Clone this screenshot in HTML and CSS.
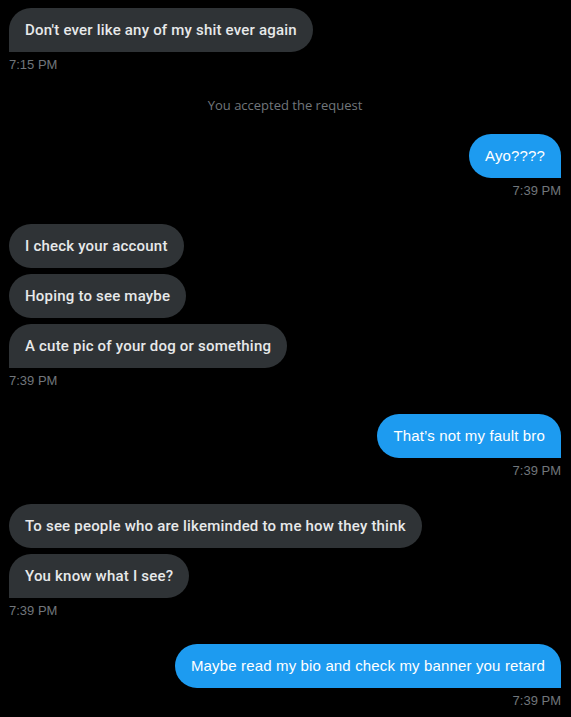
FILE: index.html
```html
<!DOCTYPE html>
<html lang="en">
<head>
    <meta charset="UTF-8">
    <meta name="viewport" content="width=device-width, initial-scale=1.0">
    <title>Messages</title>
    <link rel="stylesheet" href="styles.css">
</head>
<body>
    <div class="chat">
        <div class="group them">
            <div class="bubble last">Don't ever like any of my shit ever again</div>
            <div class="time">7:15 PM</div>
        </div>

        <div class="notice">You accepted the request</div>

        <div class="group me">
            <div class="bubble last">Ayo????</div>
            <div class="time">7:39 PM</div>
        </div>

        <div class="group them">
            <div class="bubble">I check your account</div>
            <div class="bubble">Hoping to see maybe</div>
            <div class="bubble last">A cute pic of your dog or something</div>
            <div class="time">7:39 PM</div>
        </div>

        <div class="group me">
            <div class="bubble last">That’s not my fault bro</div>
            <div class="time">7:39 PM</div>
        </div>

        <div class="group them">
            <div class="bubble">To see people who are likeminded to me how they think</div>
            <div class="bubble last">You know what I see?</div>
            <div class="time">7:39 PM</div>
        </div>

        <div class="group me">
            <div class="bubble last">Maybe read my bio and check my banner you retard</div>
            <div class="time">7:39 PM</div>
        </div>
    </div>
</body>
</html>
```

FILE: styles.css
```css
body{
    margin: 0;
    background-color: #000;
    color: #e7e9ea;
    font-family: "Liberation Sans", Arial, sans-serif;
}

.chat{
    display: flex;
    flex-direction: column;
    gap: 25px;
    padding: 8px 10px 0 9px;
}

.group{
    display: flex;
    flex-direction: column;
    gap: 6px;
}

.them{
    align-items: flex-start;
}

.me{
    align-items: flex-end;
}

.bubble{
    padding: 12px 16px;
    font-size: 15px;
    line-height: 20px;
    border-radius: 22px;
    background-color: #2f3336;
    color: #e7e9ea;
    font-family: Roboto, "Noto Sans", sans-serif;
    font-weight: 500;
    letter-spacing: 0.2px;
}

.them .bubble.last{
    border-bottom-left-radius: 0;
}

.me .bubble{
    background-color: #1d9bf0;
    color: #fff;
    font-family: "Liberation Sans", Arial, sans-serif;
    font-weight: 400;
    letter-spacing: 0.15px;
}

.me .bubble.last{
    border-bottom-right-radius: 0;
}

.time{
    margin-top: -1px;
    font-size: 13px;
    line-height: 16px;
    color: #71767b;
}

.notice{
    margin: -1px 0 -4px;
    text-align: center;
    font-size: 13px;
    line-height: 16px;
    color: #71767b;
    font-family: "Open Sans", "Noto Sans", sans-serif;
}
```
